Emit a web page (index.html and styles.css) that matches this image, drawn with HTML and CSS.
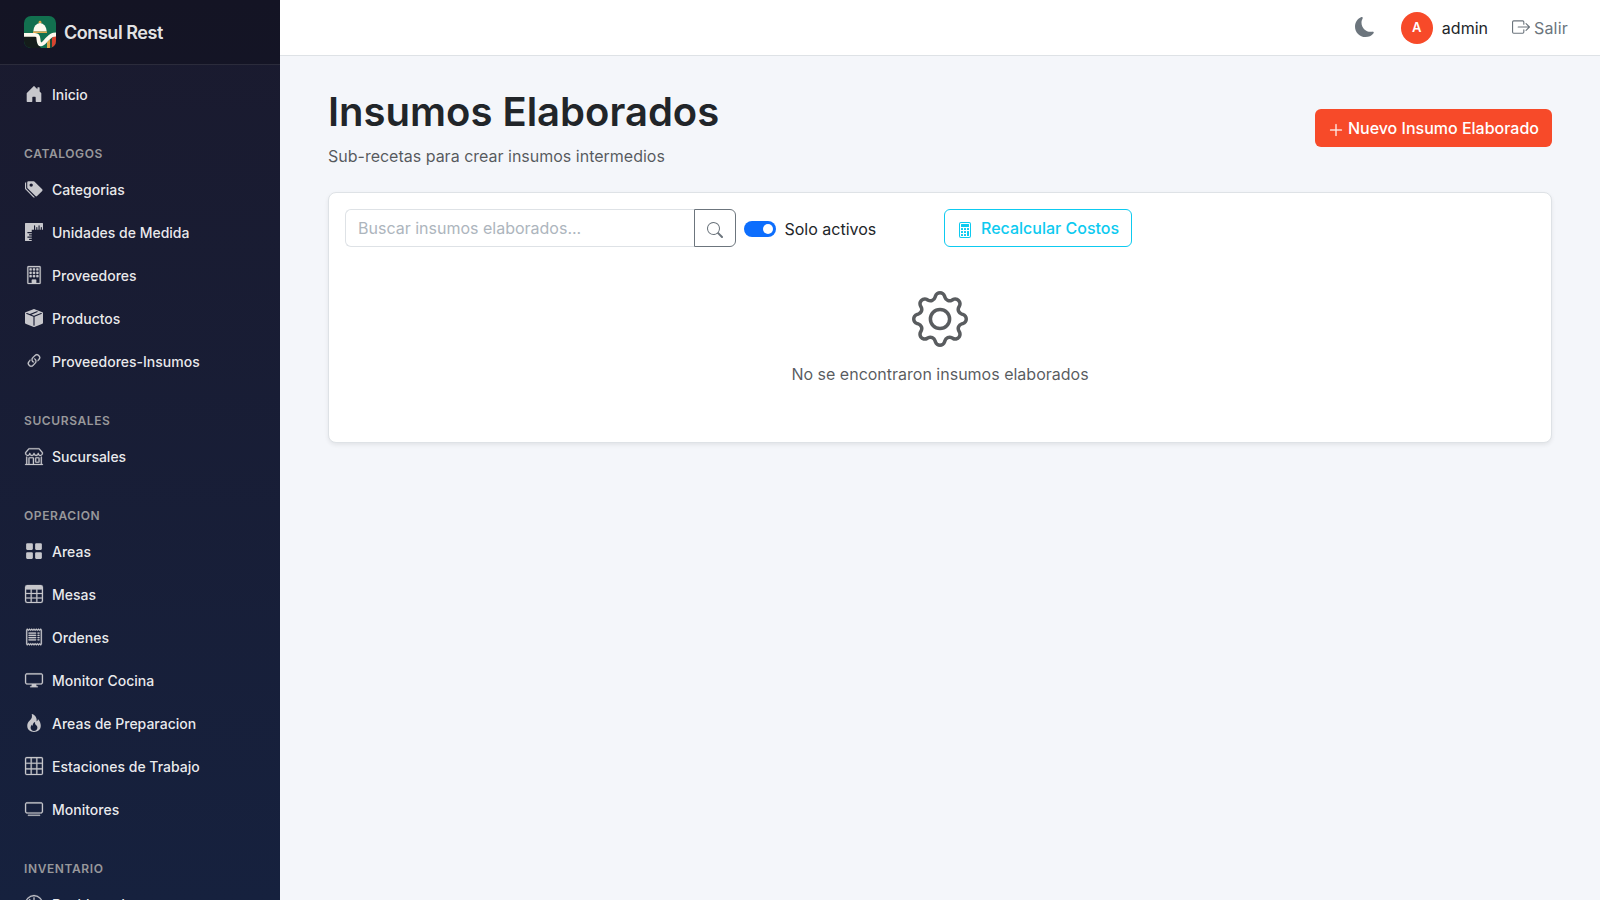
FILE: index.html
```html
<!DOCTYPE html>
<html lang="es">
<head>
    <meta charset="UTF-8">
    <meta name="viewport" content="width=device-width, initial-scale=1.0">
    <title>Insumos Elaborados - Consul Rest</title>
    <link rel="stylesheet" href="styles.css">
</head>
<body>
    <aside class="sidebar">
        <div class="sidebar-header">
            <svg class="logo" viewBox="0 0 32 32">
                <defs>
                    <clipPath id="logoClip"><rect width="32" height="32" rx="7"/></clipPath>
                </defs>
                <g clip-path="url(#logoClip)">
                    <rect width="32" height="32" fill="#12704f"/>
                    <path d="M0 20h13v7l4 5H0z" fill="#141c1a"/>
                    <path d="M23 26l3-3v9h-3z" fill="#e0a84c"/>
                    <path d="M26 24l2-2v10h-2z" fill="#1d4a38"/>
                    <path d="M28 22l4-4v14h-4z" fill="#d8432f"/>
                    <circle cx="16" cy="6.200" r="1.400" fill="#e0a84c"/>
                    <path d="M9.300 15.500a6.700 8.600 0 0 1 13.400 0z" fill="#fdf9ee"/>
                    <rect x="9" y="15.500" width="14" height="1.500" fill="#e0a84c"/>
                    <path d="M-1 18.900h12c3 0 3.300 1.500 3.500 4.500.2 3 .8 5 2.500 5 2 0 3.500-2.500 6.500-5.500 3.500-3.500 5-4.500 9.500-4.500" fill="none" stroke="#fdf9ee" stroke-width="3.900"/>
                </g>
            </svg>
            <span class="brand">Consul Rest</span>
        </div>
        <nav class="sidebar-nav">
            <a class="nav-link" href="#">
                <svg class="icon" viewBox="0 0 16 16"><path d="M6.500 14.500v-3.505c0-.245.25-.495.5-.495h2c.25 0 .5.25.5.5v3.500a.5.5 0 0 0 .5.5h4a.5.5 0 0 0 .5-.5v-7a.5.5 0 0 0-.146-.354L13 5.793V2.500a.5.5 0 0 0-.5-.5h-1a.5.5 0 0 0-.5.5v1.293L8.354 1.146a.5.5 0 0 0-.708 0l-6 6A.5.5 0 0 0 1.500 7.500v7a.5.5 0 0 0 .5.5h4a.5.5 0 0 0 .5-.5"/></svg>
                Inicio
            </a>

            <div class="nav-section">Catalogos</div>
            <a class="nav-link" href="#">
                <svg class="icon" viewBox="0 0 16 16"><path d="M2 2a1 1 0 0 1 1-1h4.586a1 1 0 0 1 .707.293l7 7a1 1 0 0 1 0 1.414l-4.586 4.586a1 1 0 0 1-1.414 0l-7-7A1 1 0 0 1 2 6.586zm3.500 4a1.500 1.500 0 1 0 0-3 1.500 1.500 0 0 0 0 3"/><path d="M1.293 7.793A1 1 0 0 1 1 7.086V2a1 1 0 0 0-1 1v4.586a1 1 0 0 0 .293.707l7 7a1 1 0 0 0 1.414 0l.043-.043z"/></svg>
                Categorias
            </a>
            <a class="nav-link" href="#">
                <svg class="icon" viewBox="0 0 16 16"><path d="M0 .5A.5.5 0 0 1 .5 0h15a.5.5 0 0 1 .5.5v5a.5.5 0 0 1-.5.5H15V4a.5.5 0 0 0-1 0v2h-1V2.500a.5.5 0 0 0-1 0V6h-1V4a.5.5 0 0 0-1 0v2H9V2.500a.5.5 0 0 0-1 0V6H6v2H2.500a.5.5 0 0 0 0 1H6v1H4a.5.5 0 0 0 0 1h2v1H2.500a.5.5 0 0 0 0 1H6v1H4a.5.5 0 0 0 0 1h2v.5a.5.5 0 0 1-.5.5h-5a.5.5 0 0 1-.5-.5z"/></svg>
                Unidades de Medida
            </a>
            <a class="nav-link" href="#">
                <svg class="icon icon-line" viewBox="0 0 16 16"><path d="M4 2.500a.5.5 0 0 1 .5-.5h1a.5.5 0 0 1 .5.5v1a.5.5 0 0 1-.5.5h-1a.5.5 0 0 1-.5-.5zm3 0a.5.5 0 0 1 .5-.5h1a.5.5 0 0 1 .5.5v1a.5.5 0 0 1-.5.5h-1a.5.5 0 0 1-.5-.5zm3.500-.5a.5.5 0 0 0-.5.5v1a.5.5 0 0 0 .5.5h1a.5.5 0 0 0 .5-.5v-1a.5.5 0 0 0-.5-.5zM4 5.500a.5.5 0 0 1 .5-.5h1a.5.5 0 0 1 .5.5v1a.5.5 0 0 1-.5.5h-1a.5.5 0 0 1-.5-.5zM7.500 5a.5.5 0 0 0-.5.5v1a.5.5 0 0 0 .5.5h1a.5.5 0 0 0 .5-.5v-1a.5.5 0 0 0-.5-.5zm2.500.5a.5.5 0 0 1 .5-.5h1a.5.5 0 0 1 .5.5v1a.5.5 0 0 1-.5.5h-1a.5.5 0 0 1-.5-.5zM4.500 8a.5.5 0 0 0-.5.5v1a.5.5 0 0 0 .5.5h1a.5.5 0 0 0 .5-.5v-1a.5.5 0 0 0-.5-.5zm2.500.5a.5.5 0 0 1 .5-.5h1a.5.5 0 0 1 .5.5v1a.5.5 0 0 1-.5.5h-1a.5.5 0 0 1-.5-.5zm3.500-.5a.5.5 0 0 0-.5.5v1a.5.5 0 0 0 .5.5h1a.5.5 0 0 0 .5-.5v-1a.5.5 0 0 0-.5-.5z"/><path d="M2 1a1 1 0 0 1 1-1h10a1 1 0 0 1 1 1v14a1 1 0 0 1-1 1H3a1 1 0 0 1-1-1zm11 0H3v14h3v-2.500a.5.5 0 0 1 .5-.5h3a.5.5 0 0 1 .5.5V15h3z"/></svg>
                Proveedores
            </a>
            <a class="nav-link" href="#">
                <svg class="icon" viewBox="0 0 16 16"><path fill-rule="evenodd" d="M15.528 2.973a.75.75 0 0 1 .472.696v8.662a.75.75 0 0 1-.472.696l-7.250 2.900a.75.75 0 0 1-.557 0l-7.250-2.900A.75.75 0 0 1 0 12.331V3.669a.75.75 0 0 1 .471-.696L7.443.184l.004-.001.274-.11a.75.75 0 0 1 .558 0l.274.11.004.001zM10.404 2 4.250 4.461 1.846 3.500 1 3.839v.4l6.500 2.600v7.922l.5.2.5-.2V6.840l6.500-2.600v-.4l-.846-.339L8 5.961 5.596 5l6.154-2.461z"/></svg>
                Productos
            </a>
            <a class="nav-link" href="#">
                <svg class="icon icon-line" viewBox="0 0 16 16"><path d="M4.715 6.542 3.343 7.914a3 3 0 1 0 4.243 4.243l1.828-1.829A3 3 0 0 0 8.586 5.500L8 6.086a1 1 0 0 0-.154.199 2 2 0 0 1 .861 3.337L6.880 11.450a2 2 0 1 1-2.830-2.830l.793-.792a4 4 0 0 1-.128-1.287z"/><path d="M6.586 4.672A3 3 0 0 0 7.414 9.500l.775-.776a2 2 0 0 1-.896-3.346L9.120 3.550a2 2 0 1 1 2.830 2.830l-.793.792c.112.420.155.855.128 1.287l1.372-1.372a3 3 0 1 0-4.243-4.243z"/></svg>
                Proveedores-Insumos
            </a>

            <div class="nav-section">Sucursales</div>
            <a class="nav-link" href="#">
                <svg class="icon icon-line" viewBox="0 0 16 16"><path d="M2.970 1.350A1 1 0 0 1 3.730 1h8.540a1 1 0 0 1 .76.350l2.609 3.044A1.500 1.500 0 0 1 16 5.370v.255a2.375 2.375 0 0 1-4.250 1.458A2.370 2.370 0 0 1 9.875 8 2.370 2.370 0 0 1 8 7.083 2.370 2.370 0 0 1 6.125 8a2.370 2.370 0 0 1-1.875-.917A2.375 2.375 0 0 1 0 5.625V5.370a1.500 1.500 0 0 1 .361-.976zm1.780 4.275a1.375 1.375 0 0 0 2.750 0 .5.5 0 0 1 1 0 1.375 1.375 0 0 0 2.750 0 .5.5 0 0 1 1 0 1.375 1.375 0 1 0 2.750 0V5.370a.5.5 0 0 0-.12-.325L12.270 2H3.730L1.120 5.045A.5.5 0 0 0 1 5.370v.255a1.375 1.375 0 0 0 2.750 0 .5.5 0 0 1 1 0M1.500 8.500A.5.5 0 0 1 2 9v6h1v-5a1 1 0 0 1 1-1h3a1 1 0 0 1 1 1v5h6V9a.5.5 0 0 1 1 0v6h.5a.5.5 0 0 1 0 1H.5a.5.5 0 0 1 0-1H1V9a.5.5 0 0 1 .5-.5M4 15h3v-5H4zm5-5a1 1 0 0 1 1-1h2a1 1 0 0 1 1 1v3a1 1 0 0 1-1 1h-2a1 1 0 0 1-1-1zm3 0h-2v3h2z"/></svg>
                Sucursales
            </a>

            <div class="nav-section">Operacion</div>
            <a class="nav-link" href="#">
                <svg class="icon" viewBox="0 0 16 16"><path d="M1 2a1 1 0 0 1 1-1h4a1 1 0 0 1 1 1v4a1 1 0 0 1-1 1H2a1 1 0 0 1-1-1zm8 0a1 1 0 0 1 1-1h4a1 1 0 0 1 1 1v4a1 1 0 0 1-1 1h-4a1 1 0 0 1-1-1zm-8 8a1 1 0 0 1 1-1h4a1 1 0 0 1 1 1v4a1 1 0 0 1-1 1H2a1 1 0 0 1-1-1zm8 0a1 1 0 0 1 1-1h4a1 1 0 0 1 1 1v4a1 1 0 0 1-1 1h-4a1 1 0 0 1-1-1z"/></svg>
                Areas
            </a>
            <a class="nav-link" href="#">
                <svg class="icon icon-line" viewBox="0 0 16 16"><path d="M0 2a2 2 0 0 1 2-2h12a2 2 0 0 1 2 2v12a2 2 0 0 1-2 2H2a2 2 0 0 1-2-2zm15 2h-4v3h4zm0 4h-4v3h4zm0 4h-4v3h3a1 1 0 0 0 1-1zm-5 3v-3H6v3zm-5 0v-3H1v2a1 1 0 0 0 1 1zm-4-4h4V8H1zm0-4h4V4H1zm5-3v3h4V4zm4 4H6v3h4z"/></svg>
                Mesas
            </a>
            <a class="nav-link" href="#">
                <svg class="icon icon-line" viewBox="0 0 16 16"><path d="M1.920.506a.5.5 0 0 1 .434.140L3 1.293l.646-.647a.5.5 0 0 1 .708 0L5 1.293l.646-.647a.5.5 0 0 1 .708 0L7 1.293l.646-.647a.5.5 0 0 1 .708 0L9 1.293l.646-.647a.5.5 0 0 1 .708 0l.646.647.646-.647a.5.5 0 0 1 .708 0l.646.647.646-.647a.5.5 0 0 1 .801.130l.5 1A.5.5 0 0 1 15 2v12a.5.5 0 0 1-.053.224l-.5 1a.5.5 0 0 1-.8.130L13 14.707l-.646.647a.5.5 0 0 1-.708 0L11 14.707l-.646.647a.5.5 0 0 1-.708 0L9 14.707l-.646.647a.5.5 0 0 1-.708 0L7 14.707l-.646.647a.5.5 0 0 1-.708 0L5 14.707l-.646.647a.5.5 0 0 1-.708 0L3 14.707l-.646.647a.5.5 0 0 1-.801-.13l-.5-1A.5.5 0 0 1 1 14V2a.5.5 0 0 1 .053-.224l.5-1a.5.5 0 0 1 .367-.27m.217 1.338L2 2.118v11.764l.137.274.51-.51a.5.5 0 0 1 .707 0l.646.647.646-.646a.5.5 0 0 1 .708 0l.646.646.646-.646a.5.5 0 0 1 .708 0l.646.646.646-.646a.5.5 0 0 1 .708 0l.646.646.646-.646a.5.5 0 0 1 .708 0l.646.646.646-.646a.5.5 0 0 1 .708 0l.509.509.137-.274V2.118l-.137-.274-.51.510a.5.5 0 0 1-.707 0L12 1.707l-.646.647a.5.5 0 0 1-.708 0L10 1.707l-.646.647a.5.5 0 0 1-.708 0L8 1.707l-.646.647a.5.5 0 0 1-.708 0L6 1.707l-.646.647a.5.5 0 0 1-.708 0L4 1.707l-.646.647a.5.5 0 0 1-.708 0z"/><path d="M3 4.500a.5.5 0 0 1 .5-.5h6a.5.5 0 1 1 0 1h-6a.5.5 0 0 1-.5-.5m0 2a.5.5 0 0 1 .5-.5h6a.5.5 0 1 1 0 1h-6a.5.5 0 0 1-.5-.5m0 2a.5.5 0 0 1 .5-.5h6a.5.5 0 1 1 0 1h-6a.5.5 0 0 1-.5-.5m0 2a.5.5 0 0 1 .5-.5h6a.5.5 0 0 1 0 1h-6a.5.5 0 0 1-.5-.5m8-6a.5.5 0 0 1 .5-.5h1a.5.5 0 0 1 0 1h-1a.5.5 0 0 1-.5-.5m0 2a.5.5 0 0 1 .5-.5h1a.5.5 0 0 1 0 1h-1a.5.5 0 0 1-.5-.5m0 2a.5.5 0 0 1 .5-.5h1a.5.5 0 0 1 0 1h-1a.5.5 0 0 1-.5-.5m0 2a.5.5 0 0 1 .5-.5h1a.5.5 0 0 1 0 1h-1a.5.5 0 0 1-.5-.5"/></svg>
                Ordenes
            </a>
            <a class="nav-link" href="#">
                <svg class="icon icon-line" viewBox="0 0 16 16"><path d="M0 4s0-2 2-2h12s2 0 2 2v6s0 2-2 2h-4q0 1 .25 1.500H11a.5.5 0 0 1 0 1H5a.5.5 0 0 1 0-1h.75Q6 13 6 12H2s-2 0-2-2zm1.398-.855a.76.760 0 0 0-.254.302A1.500 1.500 0 0 0 1 4.010V10c0 .325.078.502.145.602q.105.156.302.254a1.500 1.500 0 0 0 .538.143L2.010 11H14c.325 0 .502-.078.602-.145a.76.760 0 0 0 .254-.302 1.500 1.500 0 0 0 .143-.538L15 9.990V4c0-.325-.078-.502-.145-.602a.76.760 0 0 0-.302-.254A1.500 1.500 0 0 0 13.990 3H2c-.325 0-.502.078-.602.145"/></svg>
                Monitor Cocina
            </a>
            <a class="nav-link" href="#">
                <svg class="icon" viewBox="0 0 16 16"><path d="M8 16c3.314 0 6-2 6-5.500 0-1.500-.5-4-2.500-6 .25 1.500-1.250 2-1.250 2C11 4 9 .5 6 0c.357 2 .5 4-2 6-1.250 1-2 2.729-2 4.500C2 14 4.686 16 8 16m0-1c-1.657 0-3-1-3-2.750 0-.75.25-2 1.250-3C6.125 10 7 10.500 7 10.500c-.375-1.250.5-3.250 2-3.500-.179 1-.25 2 1 3 .625.5 1 1.364 1 2.250C11 14 9.657 15 8 15"/></svg>
                Areas de Preparacion
            </a>
            <a class="nav-link" href="#">
                <svg class="icon icon-line" viewBox="0 0 16 16"><path d="M0 1.500A1.500 1.500 0 0 1 1.500 0h13A1.500 1.500 0 0 1 16 1.500v13a1.500 1.500 0 0 1-1.500 1.500h-13A1.500 1.500 0 0 1 0 14.500zM1.500 1a.5.5 0 0 0-.5.5V5h4V1zM5 6H1v4h4zm1 4h4V6H6zm-1 1H1v3.500a.5.5 0 0 0 .5.5H5zm1 0v4h4v-4zm5 0v4h3.500a.5.5 0 0 0 .5-.5V11zm0-1h4V6h-4zm0-5h4V1.500a.5.5 0 0 0-.5-.5H11zm-1 0V1H6v4z"/></svg>
                Estaciones de Trabajo
            </a>
            <a class="nav-link" href="#">
                <svg class="icon icon-line" viewBox="0 0 16 16"><path d="M2.500 13.500A.5.5 0 0 1 3 13h10a.5.5 0 0 1 0 1H3a.5.5 0 0 1-.5-.5M13.991 3l.024.001a1.500 1.500 0 0 1 .538.143.76.760 0 0 1 .302.254c.067.100.145.277.145.602v5.991l-.001.024a1.500 1.500 0 0 1-.143.538.76.760 0 0 1-.254.302c-.1.067-.277.145-.602.145H2.009l-.024-.001a1.500 1.500 0 0 1-.538-.143.76.760 0 0 1-.302-.254C1.078 10.502 1 10.325 1 10V4.009l.001-.024a1.500 1.500 0 0 1 .143-.538.76.760 0 0 1 .254-.302C1.498 3.078 1.675 3 2 3zM14 2H2C0 2 0 4 0 4v6c0 2 2 2 2 2h12c2 0 2-2 2-2V4c0-2-2-2-2-2"/></svg>
                Monitores
            </a>

            <div class="nav-section">Inventario</div>
            <a class="nav-link" href="#">
                <svg class="icon icon-line" viewBox="0 0 16 16"><path d="M8 2a.5.5 0 0 1 .5.5V4a.5.5 0 0 1-1 0V2.500A.5.5 0 0 1 8 2M3.732 3.732a.5.5 0 0 1 .707 0l.915.914a.5.5 0 1 1-.708.708l-.914-.915a.5.5 0 0 1 0-.707M2 8a.5.5 0 0 1 .5-.5h1.586a.5.5 0 0 1 0 1H2.500A.5.5 0 0 1 2 8m9.500 0a.5.5 0 0 1 .5-.5h1.500a.5.5 0 0 1 0 1H12a.5.5 0 0 1-.5-.5"/><path fill-rule="evenodd" d="M8 0a8 8 0 1 0 0 16A8 8 0 0 0 8 0m0 1a7 7 0 1 1 0 14A7 7 0 0 1 8 1"/></svg>
                Dashboard
            </a>
        </nav>
    </aside>

    <div class="main">
        <header class="topbar">
            <button class="theme-toggle" aria-label="Tema">
                <svg viewBox="0 0 16 16"><path d="M6 .278a.77.770 0 0 1 .08.858 7.200 7.200 0 0 0-.878 3.460c0 4.021 3.278 7.277 7.318 7.277q.792-.001 1.533-.16a.79.790 0 0 1 .81.316.73.730 0 0 1-.031.893A8.350 8.350 0 0 1 8.344 16C3.734 16 0 12.286 0 7.710 0 4.266 2.114 1.312 5.124.060A.75.750 0 0 1 6 .278"/></svg>
            </button>
            <div class="user">
                <span class="avatar">A</span>
                <span>admin</span>
            </div>
            <a class="logout" href="#">
                <svg viewBox="0 0 16 16"><path fill-rule="evenodd" d="M10 12.500a.5.5 0 0 1-.5.5h-8a.5.5 0 0 1-.5-.5v-9a.5.5 0 0 1 .5-.5h8a.5.5 0 0 1 .5.5v2a.5.5 0 0 0 1 0v-2A1.500 1.500 0 0 0 9.500 2h-8A1.500 1.500 0 0 0 0 3.500v9A1.500 1.500 0 0 0 1.500 14h8a1.500 1.500 0 0 0 1.500-1.500v-2a.5.5 0 0 0-1 0z"/><path fill-rule="evenodd" d="M15.854 8.354a.5.5 0 0 0 0-.708l-3-3a.5.5 0 0 0-.708.708L14.293 7.500H5.500a.5.5 0 0 0 0 1h8.793l-2.147 2.146a.5.5 0 0 0 .708.708z"/></svg>
                Salir
            </a>
        </header>

        <main class="content">
            <div class="page-header">
                <div>
                    <h1>Insumos Elaborados</h1>
                    <p class="subtitle">Sub-recetas para crear insumos intermedios</p>
                </div>
                <button class="btn btn-primary">
                    <svg viewBox="0 0 16 16"><path d="M8 2a.5.5 0 0 1 .5.5v5h5a.5.5 0 0 1 0 1h-5v5a.5.5 0 0 1-1 0v-5h-5a.5.5 0 0 1 0-1h5v-5A.5.5 0 0 1 8 2"/></svg>
                    Nuevo Insumo Elaborado
                </button>
            </div>

            <div class="card">
                <div class="filters">
                    <div class="search">
                        <input type="text" placeholder="Buscar insumos elaborados...">
                        <button class="btn btn-search" aria-label="Buscar">
                            <svg viewBox="0 0 16 16"><path d="M11.742 10.344a6.500 6.500 0 1 0-1.397 1.398h-.001q.044.060.098.115l3.850 3.850a1 1 0 0 0 1.415-1.414l-3.850-3.850a1 1 0 0 0-.115-.1zM12 6.500a5.500 5.500 0 1 1-11 0 5.500 5.500 0 0 1 11 0"/></svg>
                        </button>
                    </div>
                    <label class="switch">
                        <span class="switch-track"></span>
                        Solo activos
                    </label>
                    <button class="btn btn-info">
                        <svg viewBox="0 0 16 16"><path d="M12 1a1 1 0 0 1 1 1v12a1 1 0 0 1-1 1H4a1 1 0 0 1-1-1V2a1 1 0 0 1 1-1zM4 0a2 2 0 0 0-2 2v12a2 2 0 0 0 2 2h8a2 2 0 0 0 2-2V2a2 2 0 0 0-2-2z"/><path d="M4 2.500a.5.5 0 0 1 .5-.5h7a.5.5 0 0 1 .5.5v2a.5.5 0 0 1-.5.5h-7a.5.5 0 0 1-.5-.5zm0 4a.5.5 0 0 1 .5-.5h1a.5.5 0 0 1 .5.5v1a.5.5 0 0 1-.5.5h-1a.5.5 0 0 1-.5-.5zm0 3a.5.5 0 0 1 .5-.5h1a.5.5 0 0 1 .5.5v1a.5.5 0 0 1-.5.5h-1a.5.5 0 0 1-.5-.5zm0 3a.5.5 0 0 1 .5-.5h1a.5.5 0 0 1 .5.5v1a.5.5 0 0 1-.5.5h-1a.5.5 0 0 1-.5-.5zm3-6a.5.5 0 0 1 .5-.5h1a.5.5 0 0 1 .5.5v1a.5.5 0 0 1-.5.5h-1a.5.5 0 0 1-.5-.5zm0 3a.5.5 0 0 1 .5-.5h1a.5.5 0 0 1 .5.5v1a.5.5 0 0 1-.5.5h-1a.5.5 0 0 1-.5-.5zm0 3a.5.5 0 0 1 .5-.5h1a.5.5 0 0 1 .5.5v1a.5.5 0 0 1-.5.5h-1a.5.5 0 0 1-.5-.5zm3-6a.5.5 0 0 1 .5-.5h1a.5.5 0 0 1 .5.5v1a.5.5 0 0 1-.5.5h-1a.5.5 0 0 1-.5-.5zm0 3a.5.5 0 0 1 .5-.5h1a.5.5 0 0 1 .5.5v4a.5.5 0 0 1-.5.5h-1a.5.5 0 0 1-.5-.5z"/></svg>
                        Recalcular Costos
                    </button>
                </div>
                <div class="empty">
                    <svg viewBox="0 0 16 16"><path d="M8 4.754a3.246 3.246 0 1 0 0 6.492 3.246 3.246 0 0 0 0-6.492M5.754 8a2.246 2.246 0 1 1 4.492 0 2.246 2.246 0 0 1-4.492 0"/><path d="M9.796 1.343c-.527-1.790-3.065-1.790-3.592 0l-.094.319a.873.873 0 0 1-1.255.520l-.292-.16c-1.640-.892-3.433.902-2.540 2.541l.159.292a.873.873 0 0 1-.52 1.255l-.319.094c-1.790.527-1.790 3.065 0 3.592l.319.094a.873.873 0 0 1 .52 1.255l-.16.292c-.892 1.640.901 3.434 2.541 2.540l.292-.159a.873.873 0 0 1 1.255.520l.094.319c.527 1.790 3.065 1.790 3.592 0l.094-.319a.873.873 0 0 1 1.255-.52l.292.160c1.640.893 3.434-.902 2.540-2.541l-.159-.292a.873.873 0 0 1 .52-1.255l.319-.094c1.790-.527 1.790-3.065 0-3.592l-.319-.094a.873.873 0 0 1-.52-1.255l.16-.292c.893-1.640-.902-3.433-2.541-2.540l-.292.159a.873.873 0 0 1-1.255-.52zm-2.633.283c.246-.835 1.428-.835 1.674 0l.094.319a1.873 1.873 0 0 0 2.693 1.115l.291-.16c.764-.415 1.600.42 1.184 1.185l-.159.292a1.873 1.873 0 0 0 1.116 2.692l.318.094c.835.246.835 1.428 0 1.674l-.319.094a1.873 1.873 0 0 0-1.115 2.693l.16.291c.415.764-.42 1.600-1.185 1.184l-.291-.159a1.873 1.873 0 0 0-2.693 1.116l-.094.318c-.246.835-1.428.835-1.674 0l-.094-.319a1.873 1.873 0 0 0-2.692-1.115l-.292.160c-.764.415-1.600-.42-1.184-1.185l.159-.291A1.873 1.873 0 0 0 1.945 8.930l-.319-.094c-.835-.246-.835-1.428 0-1.674l.319-.094A1.873 1.873 0 0 0 3.060 4.377l-.16-.292c-.415-.764.42-1.600 1.185-1.184l.292.159a1.873 1.873 0 0 0 2.692-1.115z"/></svg>
                    <p>No se encontraron insumos elaborados</p>
                </div>
            </div>
        </main>
    </div>
</body>
</html>
```
FILE: styles.css
```css
* {
    box-sizing: border-box;
}
body {
    margin: 0;
    height: 100vh;
    display: flex;
    overflow: hidden;
    font-family: Inter, "Liberation Sans", sans-serif;
    font-size: 16px;
    line-height: 1.5;
    color: #212529;
    background-color: #f4f6fa;
}
h1, p {
    margin: 0;
}
a {
    text-decoration: none;
}
svg {
    fill: currentColor;
    flex-shrink: 0;
}
button, input {
    font: inherit;
}

/* Sidebar */
.sidebar {
    width: 280px;
    height: 100vh;
    flex-shrink: 0;
    overflow-x: hidden;
    overflow-y: auto;
    scrollbar-width: none;
    background: linear-gradient(180deg, #1a1a2e 0%, #16213e 100%);
}
.sidebar-header {
    height: 65px;
    display: flex;
    align-items: center;
    gap: 8px;
    padding: 0 24px;
    background-color: rgba(0, 0, 0, 0.2);
    border-bottom: 1px solid rgba(255, 255, 255, 0.1);
}
.logo {
    width: 32px;
    height: 32px;
}
.brand {
    color: rgba(255, 255, 255, 0.9);
    font-size: 18px;
    font-weight: 600;
    letter-spacing: -0.45px;
}
.sidebar-nav {
    padding-top: 8px;
}
.nav-section {
    height: 52px;
    padding: 29px 24px 0;
    color: #98989b;
    font-size: 12px;
    font-weight: 600;
    line-height: 18px;
    letter-spacing: 0.6px;
    text-transform: uppercase;
}
.nav-link {
    height: 43px;
    display: flex;
    align-items: center;
    gap: 9px;
    padding: 0 25px;
    color: rgba(255, 255, 255, 0.92);
    font-size: 14px;
    font-weight: 500;
}
.icon {
    width: 18px;
    height: 18px;
    margin-bottom: 1px;
    color: #c7c7cc;
}
.icon-line {
    overflow: visible;
    stroke: currentColor;
    stroke-width: 0.2;
}

/* Top bar */
.main {
    flex: 1;
    min-width: 0;
}
.topbar {
    height: 56px;
    display: flex;
    align-items: center;
    justify-content: flex-end;
    padding-right: 32px;
    background-color: #fff;
    border-bottom: 1px solid #dee2e6;
}
.theme-toggle {
    display: flex;
    padding: 0;
    margin: 0 26px 2px 0;
    border: none;
    background: none;
    color: #6c757d;
}
.theme-toggle svg {
    width: 20px;
    height: 20px;
}
.user {
    display: flex;
    align-items: center;
    gap: 9px;
    margin-right: 24px;
}
.avatar {
    width: 32px;
    height: 32px;
    display: flex;
    align-items: center;
    justify-content: center;
    border-radius: 50%;
    background-color: #f74a29;
    color: #fff;
    font-size: 13px;
    font-weight: 600;
}
.logout {
    display: flex;
    align-items: center;
    gap: 4px;
    letter-spacing: 0.2px;
    color: #6c757d;
}
.logout svg {
    width: 18px;
    height: 18px;
    margin-bottom: 2px;
}

/* Content */
.content {
    padding: 32px 48px;
}
.page-header {
    display: flex;
    align-items: center;
    justify-content: space-between;
    margin-bottom: 24px;
}
h1 {
    font-size: 40px;
    font-weight: 600;
    line-height: 48px;
}
.subtitle {
    margin-top: 8px;
    color: rgba(33, 37, 41, 0.75);
}
.btn {
    height: 38px;
    display: flex;
    align-items: center;
    padding: 0 12px;
    border: 1px solid transparent;
    border-radius: 6px;
    background: none;
    font-weight: 500;
}
.btn svg {
    width: 16px;
    height: 16px;
    margin-top: 4px;
}
.btn-primary {
    gap: 4px;
    background-color: #f74a29;
    color: #fff;
}
.btn-primary svg {
    stroke: currentColor;
    stroke-width: 0.2;
}
.card {
    height: 251px;
    padding: 16px;
    background-color: #fff;
    border: 1px solid #dee2e6;
    border-radius: 8px;
    box-shadow: 0 2px 4px rgba(0, 0, 0, 0.075);
}
.filters {
    display: flex;
    align-items: center;
}
.search {
    width: 391px;
    display: flex;
    margin-right: 8px;
}
.search input {
    flex: 1;
    min-width: 0;
    height: 38px;
    padding: 0 12px;
    border: 1px solid #dee2e6;
    border-right: none;
    border-radius: 6px 0 0 6px;
    outline: none;
}
.search input::placeholder {
    color: #adb5bd;
}
.btn-search {
    width: 42px;
    border-color: #6c757d;
    border-radius: 0 6px 6px 0;
    color: #6c757d;
}
.switch {
    width: 200px;
    display: flex;
    align-items: center;
    gap: 8.5px;
    padding-top: 2px;
}
.switch-track {
    width: 32px;
    height: 16px;
    display: flex;
    justify-content: flex-end;
    padding: 3px;
    border-radius: 8px;
    background-color: #0d6efd;
}
.switch-track::after {
    content: "";
    width: 10px;
    height: 10px;
    border-radius: 50%;
    background-color: #fff;
}
.btn-info {
    gap: 8px;
    border-color: #0dcaf0;
    color: #0dcaf0;
}
.empty {
    display: flex;
    flex-direction: column;
    align-items: center;
    gap: 15px;
    padding-top: 44px;
    color: rgba(33, 37, 41, 0.75);
}
.empty svg {
    width: 56px;
    height: 56px;
}
```
